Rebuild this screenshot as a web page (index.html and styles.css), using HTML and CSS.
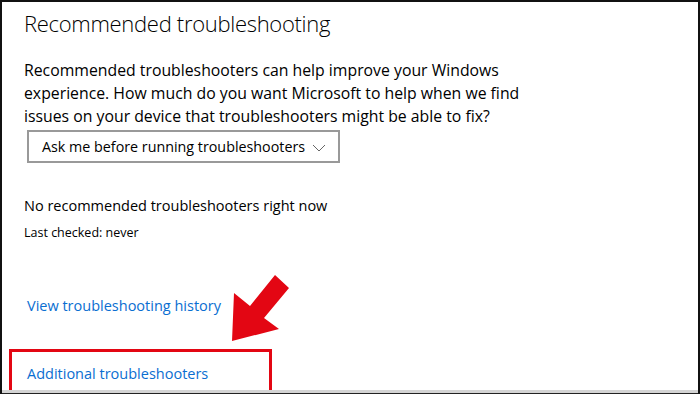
FILE: index.html
```html
<!DOCTYPE html>
<html lang="en">
<head>
    <meta charset="UTF-8">
    <meta name="viewport" content="width=device-width, initial-scale=1.0">
    <title>Recommended troubleshooting</title>
    <link rel="stylesheet" href="styles.css">
</head>
<body>
    <div class="frame">
        <div class="content">
            <h1>Recommended troubleshooting</h1>
            <p class="intro">Recommended troubleshooters can help improve your Windows<br>
                experience. How much do you want Microsoft to help when we find<br>
                issues on your device that troubleshooters might be able to fix?</p>

            <div class="dropdown">
                <span>Ask me before running troubleshooters</span>
                <svg class="chevron" width="14" height="8" viewBox="0 0 14 8">
                    <path d="M1 1 L7 7 L13 1" fill="none" stroke="#666" stroke-width="1"/>
                </svg>
            </div>

            <p class="status">No recommended troubleshooters right now</p>
            <p class="checked">Last checked: never</p>

            <a class="link history" href="#">View troubleshooting history</a>

            <div class="highlight">
                <a class="link" href="#">Additional troubleshooters</a>
            </div>
        </div>

        <!-- annotation arrow -->
        <svg class="arrow" width="70" height="75" viewBox="225 270 70 75">
            <polygon points="275,275 289,288 264,318 279,329 232,341 234,293 250,306" fill="#e30613"/>
        </svg>
    </div>
</body>
</html>
```

FILE: styles.css
```css
* {
    box-sizing: border-box;
    margin: 0;
    padding: 0;
}

body {
    font-family: "Open Sans", "Noto Sans", sans-serif;
    color: #000;
    background-color: #fff;
}

.frame {
    position: relative;
    width: 700px;
    height: 394px;
    overflow: hidden;
    border: 2px solid #111;
    border-bottom: none;
    background-color: #fff;
}
.frame::after {
    content: "";
    position: absolute;
    left: 0;
    right: 0;
    bottom: 0;
    height: 3px;
    background-color: #d4d4d4;
    border-bottom: 1px solid #222;
}

.content {
    padding: 4px 0 0 22px;
}

h1 {
    font-size: 22px;
    font-weight: 300;
    letter-spacing: -0.3px;
    line-height: 34px;
}

.intro {
    width: 560px;
    margin-top: 19px;
    font-size: 15.8px;
    line-height: 23px;
    white-space: nowrap;
}

.dropdown {
    display: flex;
    align-items: center;
    justify-content: space-between;
    width: 313px;
    height: 33px;
    margin: 2px 0 0 3px;
    padding: 0 12px 0 13px;
    border: 2px solid #999;
    font-size: 14.3px;
    white-space: nowrap;
}
.chevron {
    margin-top: 2px;
}

.status {
    margin-top: 32px;
    font-size: 14.5px;
    line-height: 22px;
}
.checked {
    margin-top: 7px;
    font-size: 12.5px;
    line-height: 18px;
}

.link {
    display: block;
    color: #0a6ed1;
    text-decoration: none;
    font-size: 14.5px;
    white-space: nowrap;
}
.history {
    margin: 53px 0 0 3px;
    line-height: 22px;
}

.highlight {
    width: 263px;
    height: 48px;
    margin: 32px 0 0 -15px;
    padding: 12px 0 0 15px;
    border: 3px solid #e30613;
}
.highlight .link {
    line-height: 20px;
}

.arrow {
    position: absolute;
    left: 223px;
    top: 268px;
}
```
